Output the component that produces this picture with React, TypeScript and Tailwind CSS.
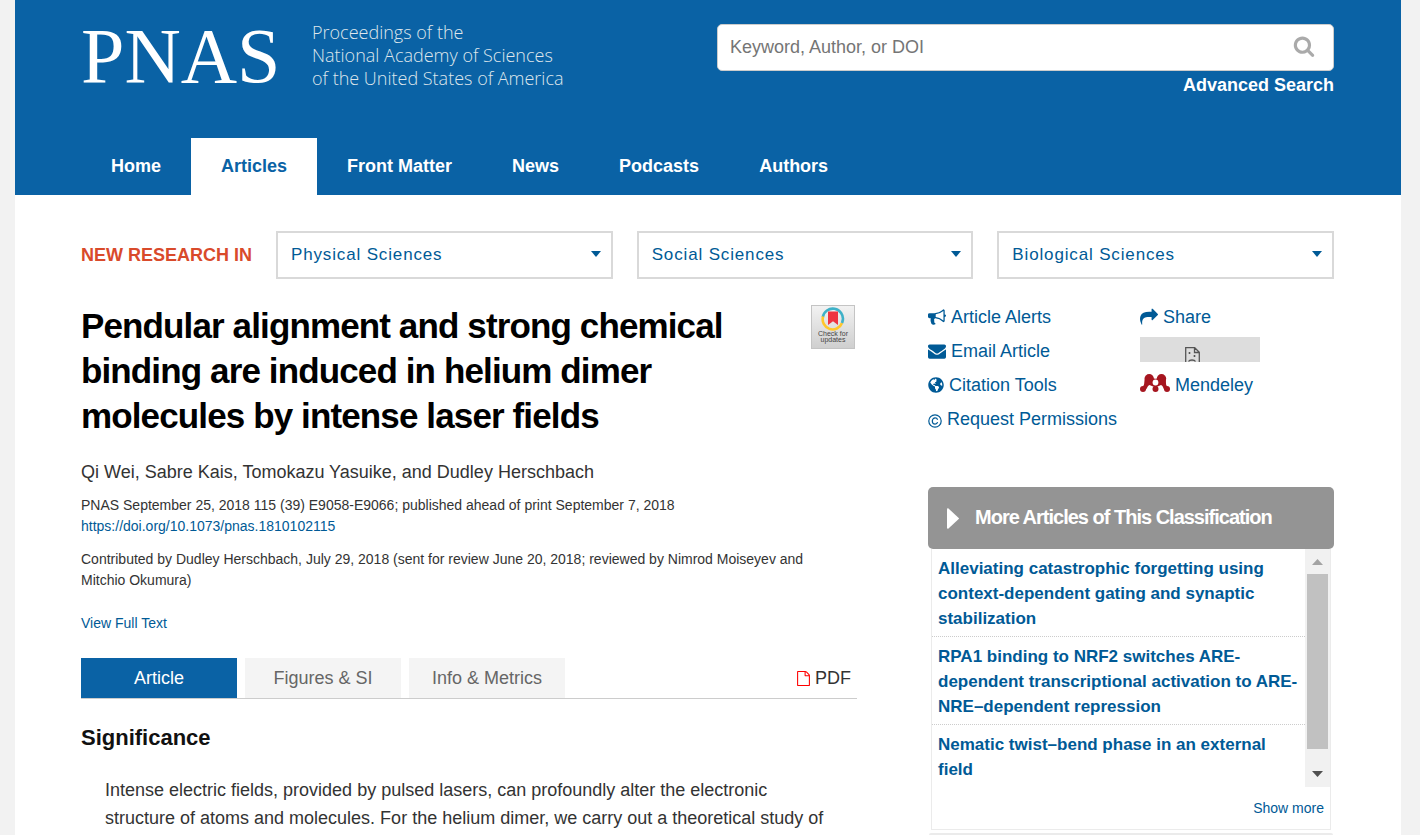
import React from "react";
import { FaGlobeAmericas } from "react-icons/fa";

type GlyphProps = { d: string; className: string };

function Glyph({ d, className }: GlyphProps) {
  return (
    <svg viewBox="0 0 1792 1792" fill="currentColor" aria-hidden="true" className={className}>
      <path d={d} />
    </svg>
  );
}

const SEARCH =
  "M1216 832q0-185-131.5-316.5t-316.5-131.5-316.5 131.5-131.5 316.5 131.5 316.5 316.5 131.5 316.5-131.5 131.5-316.5zm512 832q0 52-38 90t-90 38q-54 0-90-38l-343-342q-179 124-399 124-143 0-273.5-55.5t-225-150-150-225-55.5-273.5 55.5-273.5 150-225 225-150 273.5-55.5 273.5 55.5 225 150 150 225 55.5 273.5q0 220-124 399l343 343q37 37 37 90z";
const BULLHORN =
  "M1664 640q53 0 90.5 37.5t37.5 90.5-37.5 90.5-90.5 37.5v384q0 52-38 90t-90 38q-417-347-812-380-58 19-91 66t-31 100.5 40 92.5q-20 33-23 65.5t6 58 33.5 55 48 50 61.5 50.5q-29 58-111.5 83t-168.5 11.5-132-55.5q-7-23-29.5-87.5t-32-94.5-23-89-15-101 3.5-98.5 22-110.5h-122q-66 0-113-47t-47-113v-192q0-66 47-113t113-47h480q435 0 896-384 52 0 90 38t38 90v384zm-128 604v-954q-394 302-768 343v270q377 42 768 341z";
const ENVELOPE =
  "M1792 710v794q0 66-47 113t-113 47h-1472q-66 0-113-47t-47-113v-794q44 49 101 87 362 246 497 345 57 42 92.5 65.5t94.5 48 110 24.5h2q51 0 110-24.5t94.5-48 92.5-65.5q170-123 498-345 57-39 100-87zm0-294q0 79-49 151t-122 123q-376 261-468 325-10 7-42.5 31t-54 38.5-52 32.5-57.5 27-50 9h-2q-23 0-50-9t-57.5-27-52-32.5-54-38.5-42.5-31q-91-64-262-182.5t-205-142.5q-62-42-117-115.5t-55-136.5q0-78 41.5-130t118.5-52h1472q65 0 112.5 47t47.5 113z";
const SHARE =
  "M1792 640q0 26-19 45l-512 512q-19 19-45 19t-45-19-19-45v-256h-224q-98 0-175.5 6t-154 21.5-133 42.5-105.5 69.5-80 101-48.5 138.5-17.5 181q0 55 5 123 0 6 2.5 23.5t2.5 26.5q0 15-8.5 25t-23.5 10q-16 0-28-17-7-9-13-22t-13.5-30-10.5-24q-127-285-127-451 0-199 53-333 162-403 875-403h224v-256q0-26 19-45t45-19 45 19l512 512q19 19 19 45z";
const FILE =
  "M1596 380q28 28 48 76t20 88v1152q0 40-28 68t-68 28h-1344q-40 0-68-28t-28-68v-1600q0-40 28-68t68-28h896q40 0 88 20t76 48zm-444-244v376h376q-10-29-22-41l-313-313q-12-12-41-22zm384 1528v-1024h-416q-40 0-68-28t-28-68v-416h-768v1536h1280z";

function MendeleyIcon() {
  return (
    <svg viewBox="0 0 30 18" fill="#a61620" aria-hidden="true" className="h-[18px] w-[30px]">
      <circle cx="9.200" cy="4.800" r="4.700" />
      <circle cx="21.500" cy="4.800" r="4.700" />
      <path d="M9 3.500c4 1.500 9 1.500 13 0l3.500 1.500c1 3-.2 5 1.500 7.500l-2 3.500c-2-1-1.500-4-4-5l-5.500 2.500L9.500 11c-2.500 1-2 4-4.500 5l-2-3.500C5 10 3.800 8 5 5z" />
      <circle cx="3" cy="15" r="3" />
      <circle cx="15.500" cy="15" r="3" />
      <circle cx="27" cy="15" r="3" />
      <circle cx="15.500" cy="8.500" r="2.900" fill="#fff" />
    </svg>
  );
}

function CopyrightIcon() {
  return (
    <svg viewBox="0 0 14 14" fill="none" stroke="currentColor" strokeWidth="1.200" aria-hidden="true" className="mt-[3px] h-[14px] w-[14px]">
      <circle cx="7" cy="7" r="6.200" />
      <path d="M9.600 5.700C9.200 4.500 8.300 3.900 7.100 3.900 5.400 3.900 4.300 5.200 4.300 7s1.100 3.100 2.800 3.100c1.300 0 2.200-.7 2.500-1.900" />
    </svg>
  );
}

function CrossmarkBadge() {
  return (
    <button
      aria-label="Check for updates"
      className="flex h-[44px] w-[44px] shrink-0 flex-col items-center border border-[#c4c4c4] bg-linear-to-b from-[#f2f2f2] to-[#cfcfcf] pt-px"
    >
      <svg viewBox="0 0 24 24" aria-hidden="true" className="h-6 w-6 shrink-0">
        <g fill="none" strokeWidth="2.600">
          <path d="M1.800 10A10 10 0 0 1 21.800 13.500" stroke="#3eb1c8" />
          <path d="M2.100 9.500A10 10 0 0 0 21 16" stroke="#ffc72c" />
          <path d="M21 16A10 10 0 0 0 21.800 13" stroke="#3eb1c8" />
        </g>
        <path d="M7 4.500h10V18l-5-3.800L7 18z" fill="#ef3340" />
      </svg>
      <span className="text-center text-[7px] leading-[6px] text-[#444]">
        Check for
        <br />
        updates
      </span>
    </button>
  );
}

const NAV = ["Home", "Articles", "Front Matter", "News", "Podcasts", "Authors"];
const FIELDS = ["Physical Sciences", "Social Sciences", "Biological Sciences"];
const RELATED = [
  "Alleviating catastrophic forgetting using context-dependent gating and synaptic stabilization",
  "RPA1 binding to NRF2 switches ARE-dependent transcriptional activation to ARE-NRE–dependent repression",
  "Nematic twist–bend phase in an external field",
];

function Header() {
  return (
    <header className="bg-[#0a62a5] pt-6 pr-[67px] pl-[66px] text-white">
      <div className="flex h-[114px] items-start justify-between">
        <a href="#" className="flex items-start">
          <span className="w-[231px] font-['Liberation_Serif',serif] text-[78px] leading-[64px]">PNAS</span>
          <span className="-mt-[3px] font-['Open_Sans',sans-serif] text-[18px] leading-[23px] font-light text-[#dfe6ec]">
            Proceedings of the
            <br />
            National Academy of Sciences
            <br />
            of the United States of America
          </span>
        </a>
        <form className="w-[617px]" onSubmit={(e) => e.preventDefault()}>
          <div className="flex h-[47px] items-center rounded-[5px] border border-[#ccc] bg-white">
            <input
              type="text"
              aria-label="Keyword, Author, or DOI"
              placeholder="Keyword, Author, or DOI"
              className="h-full min-w-0 flex-1 bg-transparent pl-3 text-[18px] text-[#333] outline-none placeholder:text-[#757575]"
            />
            <button aria-label="Search" className="mr-[18px] pb-1 text-[#aaa]">
              <Glyph d={SEARCH} className="h-[22px] w-[22px]" />
            </button>
          </div>
          <div className="text-right text-[18px] leading-7 font-bold">
            <a href="#">Advanced Search</a>
          </div>
        </form>
      </div>
      <nav className="flex">
        {NAV.map((item) => (
          <a
            key={item}
            href="#"
            className={
              item === "Articles"
                ? "bg-white px-[30px] text-[18px] leading-[57px] font-bold text-[#0a62a5]"
                : "px-[30px] text-[18px] leading-[57px] font-bold text-white"
            }
          >
            {item}
          </a>
        ))}
      </nav>
    </header>
  );
}

function ResearchBar() {
  return (
    <section className="flex items-center gap-6 pt-9">
      <h2 className="w-[171px] shrink-0 text-[18px] font-bold whitespace-nowrap text-[#d94a2b]">NEW RESEARCH IN</h2>
      {FIELDS.map((field) => (
        <div key={field} className="relative flex-1">
          <select
            aria-label={field}
            className="h-12 w-full appearance-none border-2 border-[#d9d9d9] bg-white px-[13px] text-[17px] tracking-wider text-[#005a96]"
          >
            <option>{field}</option>
          </select>
          <svg viewBox="0 0 10 6" fill="#005a96" aria-hidden="true" className="pointer-events-none absolute top-5 right-3 h-[6px] w-[10px]">
            <path d="M0 0h10L5 6z" />
          </svg>
        </div>
      ))}
    </section>
  );
}

function Article() {
  return (
    <main>
      <div className="flex items-start justify-between pt-[2px] pr-[2px]">
        <h1 className="-mt-[2px] w-[715px] text-[35px] leading-[45px] font-bold tracking-tight text-black">
          Pendular alignment and strong chemical binding are induced in helium dimer molecules by intense laser fields
        </h1>
        <CrossmarkBadge />
      </div>
      <p className="mt-5 text-[18px] leading-7">Qi Wei, Sabre Kais, Tomokazu Yasuike, and Dudley Herschbach</p>
      <p className="mt-[9px] text-[14px] leading-[21px]">
        PNAS September 25, 2018 115 (39) E9058-E9066; published ahead of print September 7, 2018
        <br />
        <a href="#" className="text-[#005a96]">https://doi.org/10.1073/pnas.1810102115</a>
      </p>
      <p className="mt-3 pr-6 text-[14px] leading-[21px]">
        Contributed by Dudley Herschbach, July 29, 2018 (sent for review June 20, 2018; reviewed by Nimrod Moiseyev and
        Mitchio Okumura)
      </p>
      <p className="mt-[22px] text-[14px] leading-[21px]">
        <a href="#" className="text-[#005a96]">View Full Text</a>
      </p>
      <div className="mt-6 flex items-center gap-2 border-b border-[#ccc] text-[18px]">
        <a href="#" className="w-[156px] bg-[#0a62a5] text-center leading-10 text-white">Article</a>
        <a href="#" className="w-[156px] bg-[#f4f4f4] text-center leading-10 text-[#666]">Figures &amp; SI</a>
        <a href="#" className="w-[156px] bg-[#f4f4f4] text-center leading-10 text-[#666]">Info &amp; Metrics</a>
        <a href="#" className="mr-[6px] ml-auto flex items-center gap-1">
          <Glyph d={FILE} className="h-[15px] w-[15px] text-[#f00]" />
          PDF
        </a>
      </div>
      <h2 className="mt-[25px] text-[22px] leading-7 font-bold text-[#111]">Significance</h2>
      <p className="mt-6 px-6 text-[18px] leading-7">
        Intense electric fields, provided by pulsed lasers, can profoundly alter the electronic structure of atoms and
        molecules. For the helium dimer, we carry out a theoretical study of
      </p>
    </main>
  );
}

function ArticleTools() {
  const row = "flex h-[34px] items-center";
  return (
    <div className="grid grid-cols-[212px_1fr] text-[18px] whitespace-nowrap text-[#005a96]">
      <a href="#" className={row}>
        <Glyph d={BULLHORN} className="mr-[5px] h-[18px] w-[18px]" />
        Article Alerts
      </a>
      <a href="#" className={row}>
        <Glyph d={SHARE} className="mr-[5px] h-[18px] w-[18px]" />
        Share
      </a>
      <a href="#" className={row}>
        <Glyph d={ENVELOPE} className="mr-[5px] h-[18px] w-[18px]" />
        Email Article
      </a>
      <div className="flex h-[34px] items-center">
        <div className="mb-[3px] flex h-[25px] w-[120px] justify-center overflow-hidden bg-[#ddd] pt-[10px] pr-[15px]">
          <svg viewBox="0 0 15 18" fill="none" stroke="#555" strokeWidth="1.300" aria-hidden="true" className="h-[18px] w-[15px] shrink-0">
            <path d="M.7.7h9l4.600 4.600v12H.7zM9.500.7v4.800h4.800M3.500 14.500c1-2 6-2 7 0" />
            <path d="M4.500 5v2M9.500 8v2" strokeWidth="1.600" />
          </svg>
        </div>
      </div>
      <a href="#" className={row}>
        <FaGlobeAmericas aria-hidden="true" className="mr-[5px] h-4 w-4" />
        Citation Tools
      </a>
      <a href="#" className={row}>
        <span className="mr-[5px] mb-1"><MendeleyIcon /></span>
        Mendeley
      </a>
      <a href="#" className={row}>
        <span className="mr-[5px]"><CopyrightIcon /></span>
        Request Permissions
      </a>
    </div>
  );
}

function RelatedPanel() {
  return (
    <section className="mt-[51px]">
      <button className="flex h-[62px] w-full items-center rounded-[5px] bg-[#949494] pl-[19px] text-left text-white">
        <svg viewBox="0 0 12 21" fill="currentColor" aria-hidden="true" className="mr-4 h-[21px] w-3">
          <path d="M1.200.3Q0 0 0 1.500v18q0 1.500 1.200 1.200l10.500-9.600q.6-.6 0-1.200z" />
        </svg>
        <span className="pb-[2px] text-[20px] font-bold tracking-tighter">More Articles of This Classification</span>
      </button>
      <div className="mx-[3px] border-x border-b border-[#ebebeb]">
        <div className="flex h-[238px]">
          <ul className="min-w-0 flex-1 text-[17px] leading-[25px] font-bold text-[#005a96]">
            {RELATED.map((title) => (
              <li key={title} className="border-b border-dotted border-[#ccc] px-[6px] pt-[7px] pb-[5px] last:border-b-0">
                <a href="#">{title}</a>
              </li>
            ))}
          </ul>
          <div aria-hidden="true" className="flex w-[25px] flex-col items-center bg-[#f1f1f1]">
            <svg viewBox="0 0 25 25" className="h-[25px] w-[25px] shrink-0">
              <path d="M7 16h11l-5.500-6z" fill="#a3a3a3" />
            </svg>
            <div className="h-[175px] w-[21px] bg-[#c1c1c1]" />
            <svg viewBox="0 0 25 25" className="mt-auto h-[25px] w-[25px] shrink-0">
              <path d="M7 9h11l-5.500 6z" fill="#505050" />
            </svg>
          </div>
        </div>
        <div className="h-[42px] pr-[6px] text-right text-[14px] leading-[42px]">
          <a href="#" className="text-[#005a96]">Show more</a>
        </div>
      </div>
      <div className="mx-px mt-[3px] h-[2px] rounded-t-[5px] bg-[#ebebeb]" />
    </section>
  );
}

export default function App() {
  return (
    <div className="flex min-h-screen bg-[#f2f2f2] pr-[19px] pl-[15px] font-['Liberation_Sans',Arial,sans-serif] text-[#333]">
      <div className="min-w-0 flex-1 bg-white">
        <Header />
        <div className="pr-[67px] pl-[66px]">
          <ResearchBar />
          <div className="grid grid-cols-[minmax(0,776fr)_minmax(0,406fr)] gap-x-[71px] pt-6">
            <Article />
            <aside className="-mt-[3px]">
              <ArticleTools />
              <RelatedPanel />
            </aside>
          </div>
        </div>
      </div>
    </div>
  );
}
